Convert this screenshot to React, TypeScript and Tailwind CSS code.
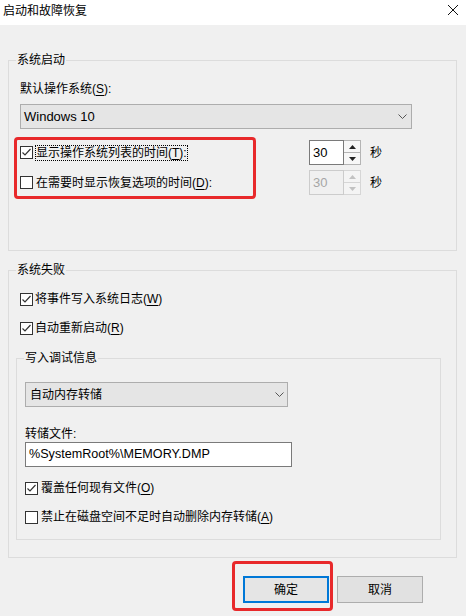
import React from "react";

function Check({ checked }: { checked: boolean }) {
  return (
    <span className="flex h-[13px] w-[13px] shrink-0 items-center justify-center border border-[#333333] bg-white">
      {checked && (
        <svg width="11" height="11" viewBox="0 0 11 11">
          <polyline points="1.5,5.5 4,8 9.5,2" fill="none" stroke="#333333" strokeWidth="1.2" />
        </svg>
      )}
    </span>
  );
}

function Chevron() {
  return (
    <svg width="9" height="5" viewBox="0 0 9 5">
      <polyline points="0.5,0.5 4.5,4.5 8.5,0.5" fill="none" stroke="#555555" strokeWidth="1" />
    </svg>
  );
}

function Arrow({ up, color }: { up: boolean; color: string }) {
  return (
    <svg width="7" height="4" viewBox="0 0 7 4">
      <polygon points={up ? "0,4 3.5,0 7,4" : "0,0 3.5,4 7,0"} fill={color} />
    </svg>
  );
}

function Spin({ disabled }: { disabled?: boolean }) {
  return (
    <div className="flex h-[25px] w-[52px]">
      <div
        className={
          disabled
            ? "flex flex-1 items-center border border-[#cccccc] bg-[#f0f0f0] pl-[3px] text-[13px] text-[#a6a6a6] font-['Liberation_Sans',sans-serif]"
            : "flex flex-1 items-center border border-[#7a7a7a] bg-white pl-[3px] text-[13px] text-black font-['Liberation_Sans',sans-serif]"
        }
      >
        30
      </div>
      <div
        className={
          disabled
            ? "flex w-[17px] flex-col border border-l-0 border-[#d6d6d6] bg-[#f4f4f4]"
            : "flex w-[17px] flex-col border border-l-0 border-[#b4b4b4] bg-[#f7f7f7]"
        }
      >
        <div className="flex flex-1 items-center justify-center">
          <Arrow up color={disabled ? "#c2c2c2" : "#222222"} />
        </div>
        <div
          className={
            disabled
              ? "flex flex-1 items-center justify-center border-t border-[#d6d6d6]"
              : "flex flex-1 items-center justify-center border-t border-[#b4b4b4]"
          }
        >
          <Arrow up={false} color={disabled ? "#c2c2c2" : "#222222"} />
        </div>
      </div>
    </div>
  );
}

function GroupHeader({ title }: { title: string }) {
  return (
    <div className="flex h-[16px]">
      <div className="mt-[8px] h-[8px] w-[8px] border-l border-t border-[#dcdcdc]" />
      <span className="px-[1px] leading-[16px]">{title}</span>
      <div className="mt-[8px] h-[8px] flex-1 border-r border-t border-[#dcdcdc]" />
    </div>
  );
}

function U({ c }: { c: string }) {
  return <span className="underline underline-offset-[2px] decoration-1">{c}</span>;
}

export default function App() {
  return (
    <div className="flex h-[616px] w-[466px] flex-col bg-[#f0f0f0] text-[12px] text-black font-['Liberation_Sans','Noto_Sans_CJK_SC',sans-serif]">
      {/* Title bar */}
      <div className="flex h-[25px] shrink-0 justify-between bg-white pl-[3px] pt-[2px]">
        <span className="leading-[16px] font-['Noto_Sans_CJK_SC',sans-serif]">启动和故障恢复</span>
        <svg className="mr-[8px] mt-[3px]" width="10" height="10" viewBox="0 0 10 10">
          <line x1="0" y1="0" x2="10" y2="10" stroke="#111111" strokeWidth="1" />
          <line x1="10" y1="0" x2="0" y2="10" stroke="#111111" strokeWidth="1" />
        </svg>
      </div>

      {/* Group 1 */}
      <div className="ml-[8px] mt-[27px] w-[449px]">
        <GroupHeader title="系统启动" />
        <div className="border-x border-b border-[#dcdcdc] pb-[55px] pl-[11px] pt-[13px]">
          <div className="leading-[16px]">
            默认操作系统(<U c="S" />):
          </div>
          <div className="mt-[7px] flex h-[25px] w-[392px] items-center justify-between border border-[#adadad] bg-[#e5e5e5] pl-[3px] pr-[4px]">
            <span className="text-[13px] font-['Liberation_Sans',sans-serif]">Windows 10</span>
            <Chevron />
          </div>
          <div className="relative mt-[11px]">
            <div className="flex h-[25px] items-center">
              <div className="flex w-[289px] items-center">
                <Check checked />
                <span className="ml-[2px] border border-dotted border-black leading-[14px]">
                  显示操作系统列表的时间(<U c="T" />):
                </span>
              </div>
              <Spin />
              <span className="ml-[9px] leading-[16px]">秒</span>
            </div>
            <div className="mt-[5px] flex h-[25px] items-center">
              <div className="flex w-[289px] items-center">
                <Check checked={false} />
                <span className="ml-[2px] border border-transparent leading-[14px]">
                  在需要时显示恢复选项的时间(<U c="D" />):
                </span>
              </div>
              <Spin disabled />
              <span className="ml-[9px] leading-[16px]">秒</span>
            </div>
            <div className="pointer-events-none absolute left-[-6px] top-[-3px] h-[62px] w-[242px] rounded-[4px] border-[3px] border-[#e8292b]" />
          </div>
        </div>
      </div>

      {/* Group 2 */}
      <div className="ml-[8px] mt-[11px] w-[449px]">
        <GroupHeader title="系统失败" />
        <div className="border-x border-b border-[#dcdcdc] pb-[17px] pl-[7px] pr-[15px] pt-[13px]">
          <div className="ml-[4px] flex h-[16px] items-center">
            <Check checked />
            <span className="ml-[2px] leading-[16px]">
              将事件写入系统日志(<U c="W" />)
            </span>
          </div>
          <div className="ml-[4px] mt-[13px] flex h-[16px] items-center">
            <Check checked />
            <span className="ml-[2px] leading-[16px]">
              自动重新启动(<U c="R" />)
            </span>
          </div>

          {/* Inner group */}
          <div className="mt-[14px]">
            <GroupHeader title="写入调试信息" />
            <div className="border-x border-b border-[#dcdcdc] pb-[14px] pl-[8px] pt-[16px]">
              <div className="flex h-[25px] w-[263px] items-center justify-between border border-[#adadad] bg-[#e5e5e5] pl-[4px] pr-[3px]">
                <span className="leading-[16px]">自动内存转储</span>
                <Chevron />
              </div>
              <div className="mt-[19px] leading-[16px]">转储文件:</div>
              <div className="flex h-[25px] w-[267px] items-center border border-[#7a7a7a] bg-white pl-[3px]">
                <span className="text-[12.6px] font-['Liberation_Sans',sans-serif]">%SystemRoot%\MEMORY.DMP</span>
              </div>
              <div className="mt-[13px] flex h-[16px] items-center">
                <Check checked />
                <span className="ml-[3px] leading-[16px]">
                  覆盖任何现有文件(<U c="O" />)
                </span>
              </div>
              <div className="mt-[13px] flex h-[16px] items-center">
                <Check checked={false} />
                <span className="ml-[3px] leading-[16px]">
                  禁止在磁盘空间不足时自动删除内存转储(<U c="A" />)
                </span>
              </div>
            </div>
          </div>
        </div>
      </div>

      {/* Buttons */}
      <div className="mt-[18px] flex justify-end gap-[8px] pr-[43px]">
        <div className="relative">
          <div className="flex h-[27px] w-[86px] items-center justify-center border-2 border-[#0078d7] bg-[#e5e5e5] leading-[16px]">
            确定
          </div>
          <div className="pointer-events-none absolute left-[-11px] top-[-15px] h-[50px] w-[101px] rounded-[4px] border-[3px] border-[#e8292b]" />
        </div>
        <div className="flex h-[27px] w-[86px] items-center justify-center border border-[#adadad] bg-[#e1e1e1] leading-[16px]">
          取消
        </div>
      </div>
    </div>
  );
}
